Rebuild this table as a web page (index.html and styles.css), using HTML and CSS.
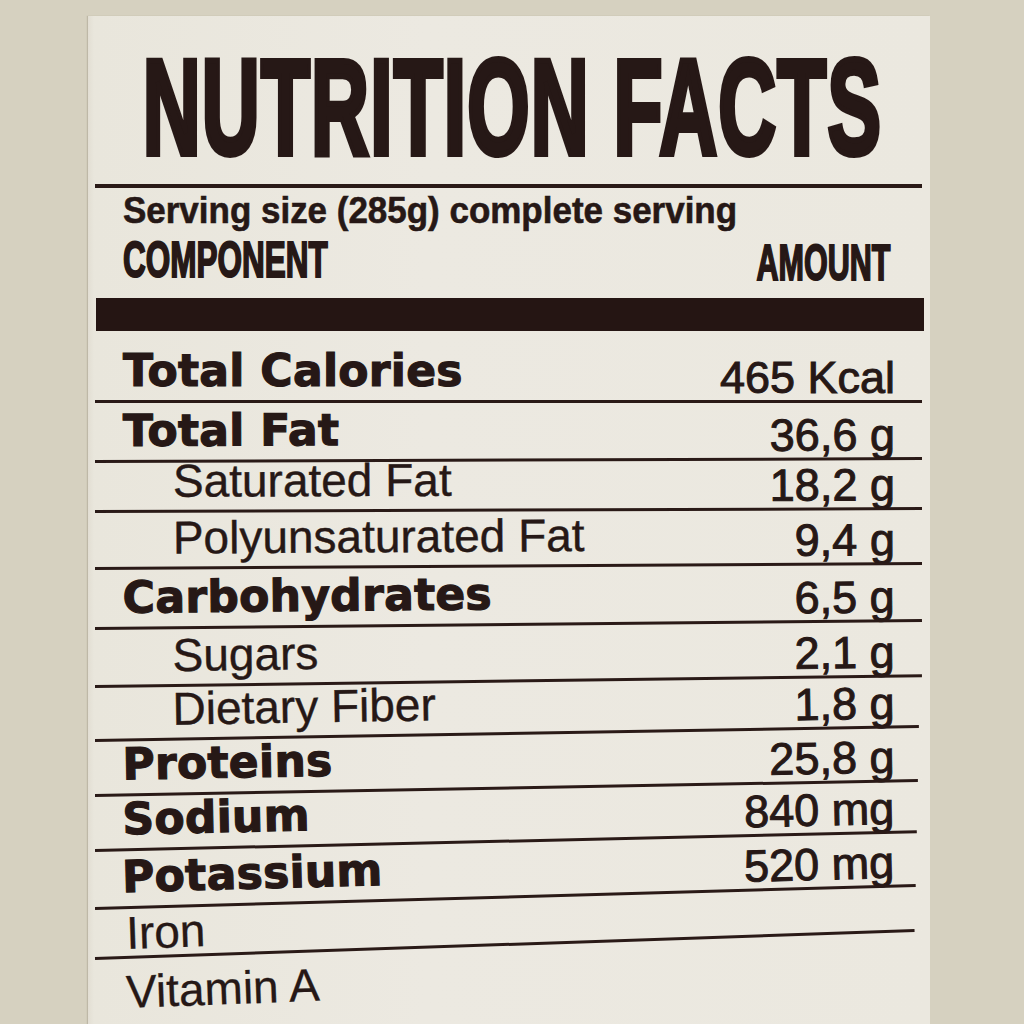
FILE: index.html
```html
<!DOCTYPE html>
<html lang="en">
<head>
<meta charset="utf-8">
<title>Nutrition Facts</title>
<link rel="stylesheet" href="styles.css">
</head>
<body>
<div class="paper">
  <h1 class="title"><span class="title-text">NUTRITION FACTS</span></h1>
  <div class="rule"></div>
  <p class="serving"><span class="serving-text">Serving size (285g) complete serving</span></p>
  <div class="colhead">
    <span class="ch ch-left">COMPONENT</span>
    <span class="ch ch-right">AMOUNT</span>
  </div>
  <div class="bar"></div>
  <div class="rows">
    <div class="row r1"><span class="label">Total Calories</span><span class="value">465 Kcal</span></div>
    <div class="row r2"><span class="label">Total Fat</span><span class="value">36,6 g</span></div>
    <div class="row r3"><span class="sub">Saturated Fat</span><span class="value">18,2 g</span></div>
    <div class="row r4"><span class="sub">Polyunsaturated Fat</span><span class="value">9,4 g</span></div>
    <div class="row r5"><span class="label">Carbohydrates</span><span class="value">6,5 g</span></div>
    <div class="row r6"><span class="sub">Sugars</span><span class="value">2,1 g</span></div>
    <div class="row r7"><span class="sub">Dietary Fiber</span><span class="value">1,8 g</span></div>
    <div class="row r8"><span class="label">Proteins</span><span class="value">25,8 g</span></div>
    <div class="row r9"><span class="label">Sodium</span><span class="value">840 mg</span></div>
    <div class="row r10"><span class="label">Potassium</span><span class="value">520 mg</span></div>
    <div class="row r11"><span class="plain">Iron</span></div>
    <div class="row r12 last"><span class="plain">Vitamin A</span></div>
  </div>
</div>
</body>
</html>
```
FILE: styles.css
```css
html, body {
  margin: 0;
  padding: 0;
  height: 100%;
  overflow: hidden;
}

body {
  background: #d6d1c0;
  color: #261816;
  font-family: "Liberation Sans", Arial, sans-serif;
}

.paper {
  margin: 16px 0 0 88px;
  width: 842px;
  height: 1040px;
  padding-top: 21px;
  box-sizing: border-box;
  background: linear-gradient(90deg, #e2ded3 0, #e9e6dc 6px, #ece9e1 40%, #ebe8df 100%);
  box-shadow: -1px 0 1px rgba(120, 110, 90, 0.25);
}

.title {
  margin: 0;
  height: 142px;
  display: flex;
  justify-content: center;
  padding-left: 7px;
  font-family: "Liberation Sans", Arial, sans-serif;
  font-weight: bold;
  font-size: 135px;
  line-height: 142px;
  white-space: nowrap;
}

.title-text {
  display: inline-block;
  transform: scaleX(0.594);
  transform-origin: center;
  letter-spacing: 2px;
  -webkit-text-stroke: 6px #261816;
}

.rule {
  margin: 5px 8px 0 7px;
  height: 4px;
  background: #2a1a17;
}

.serving {
  margin: 5px 0 0 35px;
  height: 36px;
  font-weight: bold;
  font-size: 37px;
  line-height: 36px;
  white-space: nowrap;
}

.serving-text {
  display: inline-block;
  transform: scaleX(0.945);
  transform-origin: left center;
  -webkit-text-stroke: 0.6px #261816;
}

.colhead {
  margin-top: 6px;
  display: flex;
  justify-content: space-between;
  padding: 0 40px 0 35px;
  height: 50px;
}

.ch {
  display: inline-block;
  font-weight: bold;
  font-size: 50px;
  line-height: 50px;
  -webkit-text-stroke: 2px #261816;
  white-space: nowrap;
}

.ch-left {
  transform: scaleX(0.63);
  transform-origin: left center;
}

.ch-right {
  transform: translateY(3px) scaleX(0.61);
  transform-origin: right center;
}

.bar {
  margin: 13px 6px 0 8px;
  height: 33px;
  background: #251513;
}

.rows {
  padding-top: 13px;
}

.row {
  position: relative;
  display: flex;
  justify-content: space-between;
  align-items: flex-end;
  box-sizing: border-box;
  padding: 0 35px 7px 35px;
  transform: rotate(var(--tilt, 0deg));
  transform-origin: 7px 100%;
  white-space: nowrap;
}

.row::after {
  content: "";
  position: absolute;
  left: 7px;
  width: var(--len, 827px);
  bottom: -1.5px;
  height: 3px;
  background: #2a1a17;
}

.row.last::after {
  display: none;
}

.label {
  font-family: "DejaVu Sans", sans-serif;
  font-weight: bold;
  font-size: 44px;
  line-height: 46px;
  letter-spacing: 0.3px;
  -webkit-text-stroke: 1.2px #261816;
}

.sub {
  font-family: "Liberation Sans", Arial, sans-serif;
  font-size: 46px;
  line-height: 46px;
  padding-left: 50px;
  -webkit-text-stroke: 0.4px #261816;
}

.plain {
  font-family: "Liberation Sans", Arial, sans-serif;
  font-size: 46px;
  line-height: 46px;
  padding-left: 4px;
  -webkit-text-stroke: 0.3px #261816;
}

.value {
  font-family: "Liberation Sans", Arial, sans-serif;
  font-size: 45px;
  line-height: 46px;
  -webkit-text-stroke: 1px #261816;
  transform: translateY(7px);
}

.r1 { height: 57px; --tilt: 0deg; }
.r2 { height: 60px; --tilt: -0.2deg; }
.r3 { height: 50px; --tilt: -0.2deg; }
.r4 { height: 57px; --tilt: -0.35deg; }
.r5 { height: 60px; --tilt: -0.55deg; }
.r6 { height: 58px; --tilt: -0.75deg; }
.r7 { height: 54px; --tilt: -0.97deg; --len: 824px; }
.r8 { height: 55px; --tilt: -1.04deg; --len: 823px; }
.r9 { height: 55px; --tilt: -1.3deg; --len: 822px; }
.r10 { height: 58px; --tilt: -1.6deg; --len: 821px; }
.r11 { height: 50px; --tilt: -1.95deg; --len: 820px; padding-bottom: 1px; }
.r12 { height: 58px; --tilt: -2.1deg; padding-bottom: 0; }
```
